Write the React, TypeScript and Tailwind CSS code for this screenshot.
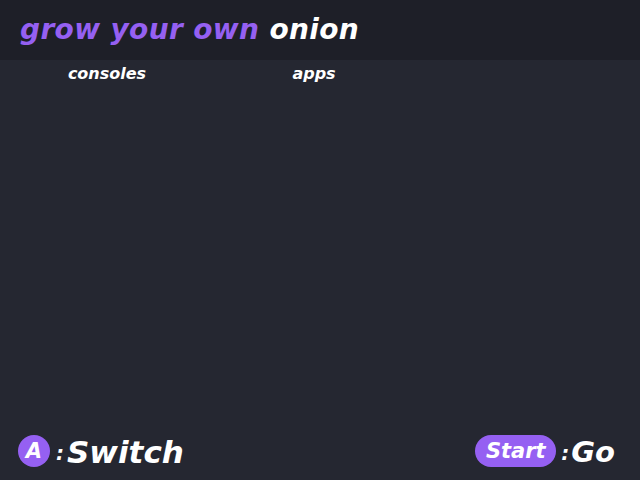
const font = "font-['DejaVu_Sans','Noto_Sans',sans-serif] italic";

const App = () => (
  <div className={`w-[640px] h-[480px] flex flex-col bg-[#252731] ${font}`}>
    <div className="h-[60px] flex items-center px-[20px] bg-[#1e1f28]">
      <h1 className="text-[28px] font-bold leading-none tracking-[0.35px] pb-[1px]">
        <span className="text-[#9560f2]">grow your own</span>{" "}
        <span className="text-white">onion</span>
      </h1>
    </div>
    <div className="flex h-[28px] items-center text-white text-[16px] font-bold">
      <div className="w-[214px] text-center">consoles</div>
      <div className="w-[200px] text-center">apps</div>
    </div>
    <div className="flex-1" />
    <div className="h-[60px] flex items-center justify-between px-[18px] pt-[2px] text-white">
      <div className="flex items-center">
        <div className="w-[32px] h-[32px] rounded-full bg-[#9560f2] flex items-center justify-center text-[21px] font-bold leading-none">
          A
        </div>
        <span className="ml-[6px] mt-[4px] text-[20px] font-bold">:</span>
        <span className="ml-[3px] mt-[3px] text-[31px] font-bold leading-none">Switch</span>
      </div>
      <div className="flex items-center mr-[7px]">
        <div className="w-[81px] h-[32px] rounded-full bg-[#9560f2] flex items-center justify-center text-[21px] font-bold leading-none">
          Start
        </div>
        <span className="ml-[5px] mt-[4px] text-[20px] font-bold">:</span>
        <span className="ml-[2px] mt-[3px] text-[29px] font-bold leading-none">Go</span>
      </div>
    </div>
  </div>
);

export default App;
